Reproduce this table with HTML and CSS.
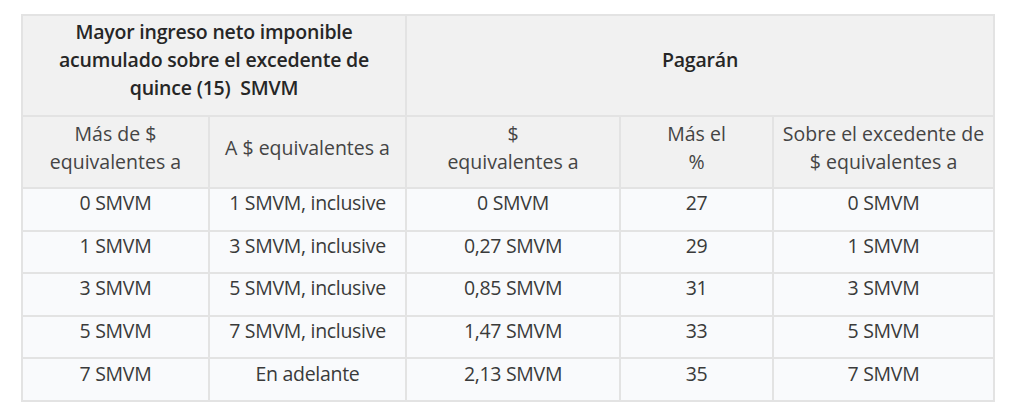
FILE: index.html
```html
<!DOCTYPE html>
<html lang="es">
<head>
<meta charset="utf-8">
<link rel="stylesheet" href="styles.css">
</head>
<body>
<div class="page">
<table class="tabla">
  <colgroup>
    <col class="c1"><col class="c2"><col class="c3"><col class="c4"><col class="c5">
  </colgroup>
  <thead>
    <tr class="h1">
      <th colspan="2">Mayor ingreso neto imponible<br>acumulado sobre el excedente de<br>quince (15)&nbsp; SMVM</th>
      <th colspan="3">Pagarán</th>
    </tr>
    <tr class="h2">
      <td>Más de $<br>equivalentes a</td>
      <td>A $ equivalentes a</td>
      <td>$<br>equivalentes a</td>
      <td>Más el<br>%</td>
      <td>Sobre el excedente de<br>$ equivalentes a</td>
    </tr>
  </thead>
  <tbody>
    <tr><td>0 SMVM</td><td>1 SMVM, inclusive</td><td>0 SMVM</td><td>27</td><td>0 SMVM</td></tr>
    <tr><td>1 SMVM</td><td>3 SMVM, inclusive</td><td>0,27 SMVM</td><td>29</td><td>1 SMVM</td></tr>
    <tr><td>3 SMVM</td><td>5 SMVM, inclusive</td><td>0,85 SMVM</td><td>31</td><td>3 SMVM</td></tr>
    <tr><td>5 SMVM</td><td>7 SMVM, inclusive</td><td>1,47 SMVM</td><td>33</td><td>5 SMVM</td></tr>
    <tr><td>7 SMVM</td><td>En adelante</td><td>2,13 SMVM</td><td>35</td><td>7 SMVM</td></tr>
  </tbody>
</table>
</div>
</body>
</html>
```

FILE: styles.css
```css
html, body {
  margin: 0;
  padding: 0;
  background: #ffffff;
}
.page {
  padding: 14px 0 0 21px;
}
.tabla {
  border-collapse: collapse;
  table-layout: fixed;
  width: 972px;
  font-family: "Open Sans", "Liberation Sans", sans-serif;
  font-size: 19.5px;
  line-height: 28px;
  color: #333333;
  border: 2px solid #e3e3e3;
}
.c1 { width: 187px; }
.c2 { width: 197px; }
.c3 { width: 214px; }
.c4 { width: 153px; }
.c5 { width: 221px; }
.tabla th,
.tabla td {
  border: 2px solid #e3e3e3;
  text-align: center;
  vertical-align: middle;
  padding: 0 2px;
  white-space: nowrap;
}
.tabla thead th,
.tabla thead td {
  background: #f1f1f1;
}
.tabla th {
  font-weight: 600;
  color: #262626;
  letter-spacing: -0.2px;
}
.h1 th {
  height: 87px;
  padding-bottom: 12px;
}
.h2 td {
  height: 61px;
  color: #444444;
  padding-bottom: 9px;
}
.tabla tbody td {
  background: #f9fafc;
  height: 28.6px;
  padding-bottom: 12px;
  color: #3a3a3a;
  letter-spacing: -0.3px;
}
```
